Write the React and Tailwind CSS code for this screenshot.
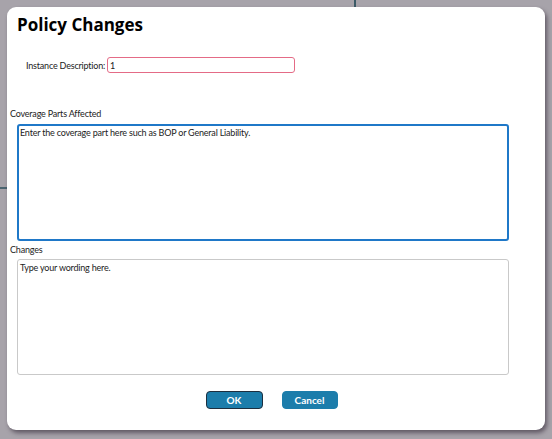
import React, { useState } from 'react';

function App() {
  const [instance, setInstance] = useState('1');
  const [coverage, setCoverage] = useState('Enter the coverage part here such as BOP or General Liability.');
  const [changes, setChanges] = useState('Type your wording here.');

  return (
    <div className="relative w-[552px] h-[439px] overflow-hidden bg-[#a7a3aa] font-['Lato',sans-serif] text-[#222]">
      {/* bits of the page behind the dialog */}
      <div className="absolute left-[354px] top-0 w-[2px] h-[8px] bg-[#3b5a66]"></div>
      <div className="absolute left-0 top-[187px] w-[8px] h-[2px] bg-[#4a6470]"></div>

      <div className="absolute left-[7px] top-[7px] w-[538px] h-[423px] rounded-[9px] bg-white shadow-[2px_3px_4px_rgba(40,30,45,0.55)]">
        <div className="flex flex-col pl-[3px] pt-[8px]">
          <h2 className="pl-[7px] font-['Open_Sans',sans-serif] text-[17px] font-bold leading-[20px] text-black">Policy Changes</h2>

          <div className="flex items-center mt-[22px] pl-[16px] h-[16px]">
            <label className="text-[9px] tracking-[-0.2px] leading-none mr-[2px]">Instance Description:</label>
            <input
              type="text"
              value={instance}
              onChange={(e) => setInstance(e.target.value)}
              className="w-[188px] h-[16px] border border-[#e46b86] rounded-[3px] px-[2px] text-[9px] outline-none"
            />
          </div>

          <div className="mt-[34px] text-[9px] tracking-[-0.2px] leading-[14px]">Coverage Parts Affected</div>
          <textarea
            value={coverage}
            onChange={(e) => setCoverage(e.target.value)}
            className="ml-[7px] mt-[3px] w-[492px] h-[117px] border-2 border-[#1f78c8] rounded-[3px] px-[1px] py-0 text-[9px] tracking-[-0.2px] leading-[14px] resize-none outline-none"
          />

          <div className="mt-[2px] text-[9px] tracking-[-0.2px] leading-[14px]">Changes</div>
          <textarea
            value={changes}
            onChange={(e) => setChanges(e.target.value)}
            className="ml-[7px] mt-[2px] w-[492px] h-[116px] border border-[#c9c9c9] rounded-[3px] px-[2px] py-px text-[9px] tracking-[-0.2px] leading-[14px] resize-none outline-none"
          />

          <div className="flex justify-center gap-[19px] mt-[16px] pr-[12px]">
            <button className="w-[57px] h-[18px] rounded-[4px] bg-[#1c7dab] border border-[#1d2f3f] text-white text-[10px] font-bold leading-none">OK</button>
            <button className="w-[56px] h-[18px] rounded-[4px] bg-[#1c7dab] border border-[#1c7dab] text-white text-[10px] font-bold leading-none">Cancel</button>
          </div>
        </div>
      </div>
    </div>
  );
}

export default App;
